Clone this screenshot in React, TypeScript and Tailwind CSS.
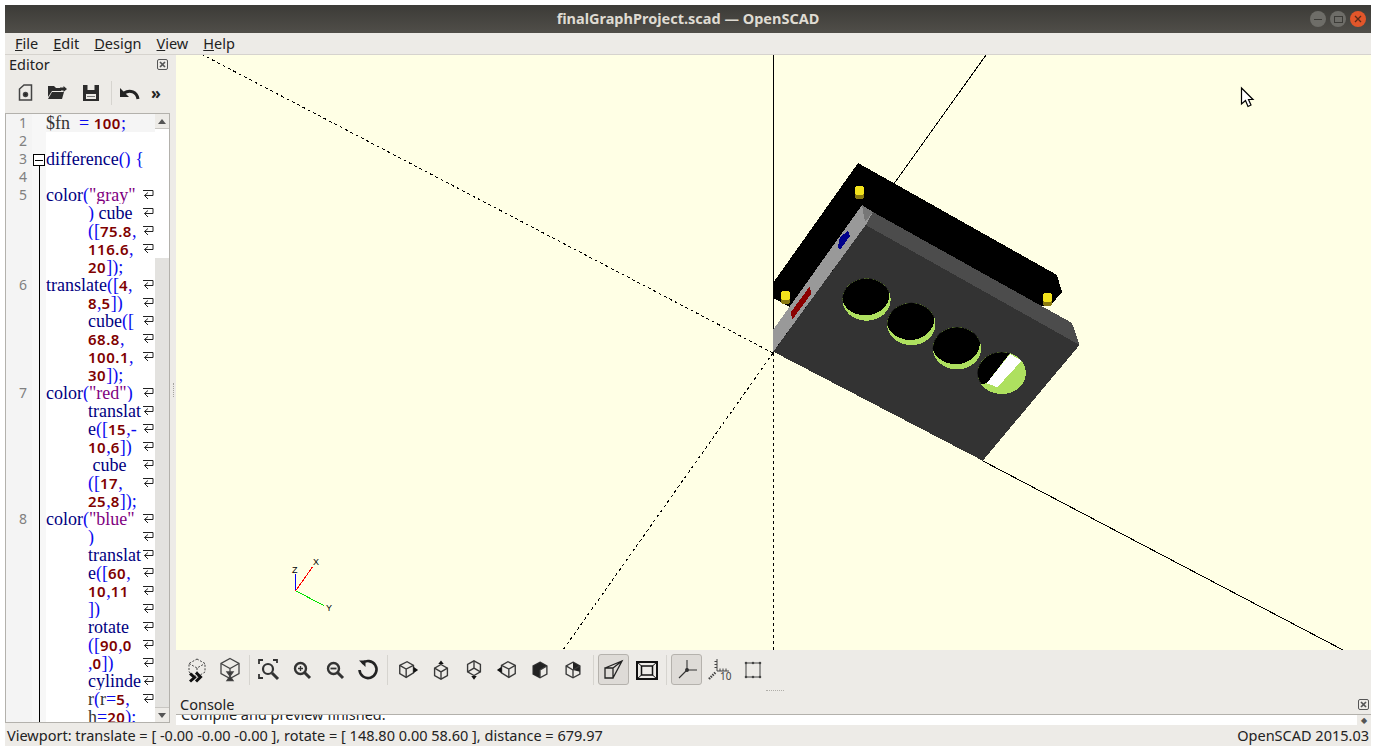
import type { ReactNode } from 'react';

const UI = { fontFamily: '"Noto Sans", sans-serif' };

// token kinds: k keyword, p punctuation, s string, n number, t plain
type Tok = [string, 'k' | 'p' | 's' | 'n' | 't'];
type Row = { no?: number; fold?: boolean; line?: boolean; ind?: boolean; wrap?: boolean; cur?: boolean; toks?: Tok[] };

const rows: Row[] = [
  { no: 1, cur: true, toks: [['$fn', 't'], ['  = ', 'p'], ['100', 'n'], [';', 'p']] },
  { no: 2 },
  { no: 3, fold: true, toks: [['difference', 'k'], ['()', 'p'], [' {', 'p']] },
  { no: 4, line: true },
  { no: 5, line: true, wrap: true, toks: [['color', 'k'], ['(', 'p'], ['"gray"', 's']] },
  { line: true, ind: true, wrap: true, toks: [[')', 'p'], [' cube', 'k']] },
  { line: true, ind: true, wrap: true, toks: [['([', 'p'], ['75.8', 'n'], [',', 'p']] },
  { line: true, ind: true, wrap: true, toks: [['116.6', 'n'], [',', 'p']] },
  { line: true, ind: true, toks: [['20', 'n'], ['])', 'p'], [';', 'p']] },
  { no: 6, line: true, wrap: true, toks: [['translate', 'k'], ['([', 'p'], ['4', 'n'], [',', 'p']] },
  { line: true, ind: true, wrap: true, toks: [['8', 'n'], [',', 'p'], ['5', 'n'], ['])', 'p']] },
  { line: true, ind: true, wrap: true, toks: [['cube', 'k'], ['([', 'p']] },
  { line: true, ind: true, wrap: true, toks: [['68.8', 'n'], [',', 'p']] },
  { line: true, ind: true, wrap: true, toks: [['100.1', 'n'], [',', 'p']] },
  { line: true, ind: true, toks: [['30', 'n'], ['])', 'p'], [';', 'p']] },
  { no: 7, line: true, wrap: true, toks: [['color', 'k'], ['(', 'p'], ['"red"', 's'], [')', 'p']] },
  { line: true, ind: true, wrap: true, toks: [['translat', 'k']] },
  { line: true, ind: true, wrap: true, toks: [['e', 'k'], ['([', 'p'], ['15', 'n'], [',-', 'p']] },
  { line: true, ind: true, wrap: true, toks: [['10', 'n'], [',', 'p'], ['6', 'n'], ['])', 'p']] },
  { line: true, ind: true, wrap: true, toks: [[' cube', 'k']] },
  { line: true, ind: true, wrap: true, toks: [['([', 'p'], ['17', 'n'], [',', 'p']] },
  { line: true, ind: true, toks: [['25', 'n'], [',', 'p'], ['8', 'n'], ['])', 'p'], [';', 'p']] },
  { no: 8, line: true, wrap: true, toks: [['color', 'k'], ['(', 'p'], ['"blue"', 's']] },
  { line: true, ind: true, wrap: true, toks: [[')', 'p']] },
  { line: true, ind: true, wrap: true, toks: [['translat', 'k']] },
  { line: true, ind: true, wrap: true, toks: [['e', 'k'], ['([', 'p'], ['60', 'n'], [',', 'p']] },
  { line: true, ind: true, wrap: true, toks: [['10', 'n'], [',', 'p'], ['11', 'n']] },
  { line: true, ind: true, wrap: true, toks: [['])', 'p']] },
  { line: true, ind: true, wrap: true, toks: [['rotate', 'k']] },
  { line: true, ind: true, wrap: true, toks: [['([', 'p'], ['90', 'n'], [',', 'p'], ['0', 'n']] },
  { line: true, ind: true, wrap: true, toks: [[',', 'p'], ['0', 'n'], ['])', 'p']] },
  { line: true, ind: true, wrap: true, toks: [['cylinde', 'k']] },
  { line: true, ind: true, wrap: true, toks: [['r', 't'], ['(', 'p'], ['r', 't'], ['=', 'p'], ['5', 'n'], [',', 'p']] },
  { line: true, ind: true, toks: [['h', 't'], ['=', 'p'], ['20', 'n'], [')', 'p'], [';', 'p']] },
];

function Token({ tok }: { tok: Tok }) {
  const [text, kind] = tok;
  if (kind === 'n') return <span className="font-['Noto_Sans',sans-serif] text-[15px] font-semibold tracking-[0.5px] text-[#7f0000]">{text}</span>;
  if (kind === 'k') return <span className="text-[#00007f]">{text}</span>;
  if (kind === 's') return <span className="text-[#7f007f]">{text}</span>;
  if (kind === 'p') return <span className="text-[#0a0aee]">{text}</span>;
  return <span className="text-[#333333]">{text}</span>;
}

function WrapMark() {
  return (
    <svg width="11" height="10" viewBox="0 0 11 10" fill="none" stroke="#222" strokeWidth="1">
      <path d="M0 0.5H10V5.5H1.5M5 2.5L1.5 5.5L5 9" />
    </svg>
  );
}

function EditorRow({ row }: { row: Row }) {
  return (
    <div className="flex h-[18px] shrink-0">
      <div className="flex w-[26px] shrink-0 items-center justify-end bg-[#f4f4f4] pb-px pr-[5px] text-[14px] text-[#808080]" style={UI}>
        {row.no}
      </div>
      <div className="relative flex w-[14px] shrink-0 justify-center bg-[#f7f7f7]">
        {row.line && <div className="h-full w-px bg-black" />}
        {row.fold && (
          <>
            <div className="mt-[4px] flex h-[12px] w-[12px] items-center justify-center border border-black bg-white">
              <div className="h-px w-[8px] bg-black" />
            </div>
            <div className="absolute bottom-0 h-[2px] w-px bg-black" />
          </>
        )}
      </div>
      <div className={`flex min-w-0 flex-1 items-center justify-between pr-[1px] ${row.cur ? 'bg-[#f5f5f5]' : 'bg-white'}`}>
        <div className={`-mt-px whitespace-pre font-['Liberation_Serif',serif] text-[18px] leading-[18px] ${row.ind ? 'pl-[42px]' : ''}`}>
          {row.toks?.map((t, i) => <Token key={i} tok={t} />)}
        </div>
        {row.wrap && <WrapMark />}
      </div>
    </div>
  );
}

function CloseBox() {
  return (
    <svg width="11" height="11" viewBox="0 0 11 11" fill="none" stroke="#555">
      <rect x="0.5" y="0.5" width="10" height="10" rx="1.5" />
      <path d="M3 3L8 8M8 3L3 8" strokeWidth="1.7" />
    </svg>
  );
}

function Magnifier({ children }: { children?: ReactNode }) {
  return (
    <svg width="22" height="22" viewBox="0 0 22 22" fill="none" stroke="#333" strokeWidth="2.4">
      <circle cx="9.5" cy="9.5" r="5.5" />
      <path d="M13.5 13.5L19 19" strokeWidth="3" />
      {children}
    </svg>
  );
}

function CubeIcon({ outline, inner, fill, marker }: { outline: string; inner: string; fill?: string; marker?: string }) {
  return (
    <svg width="22" height="22" viewBox="0 0 24 24" fill="none" stroke="#3a3a3a" strokeWidth="1.5">
      <path d={outline} />
      {fill && <path d={fill} fill="#222" stroke="none" />}
      <path d={inner} />
      {marker && <path d={marker} fill="#111" stroke="none" />}
    </svg>
  );
}

const toolbar: ReactNode[] = [
  <svg width="26" height="26" viewBox="0 0 26 26" fill="none" stroke="#444">
    <path d="M13 2L21 6.5V15L13 20L5 15V6.5Z" strokeDasharray="2 1.5" />
    <path d="M5 6.5L13 11L21 6.5M13 11V18" strokeDasharray="2 1.5" />
    <path d="M6 16.5L10.5 20.5L6 24.5M12 15.5L16.5 20L12 24.5" stroke="#111" strokeWidth="3" />
  </svg>,
  <svg width="26" height="26" viewBox="0 0 26 26" fill="none" stroke="#444" strokeWidth="1.3">
    <path d="M13 1.5L22 6.5V16.5L13 21.5L4 16.5V6.5Z" />
    <path d="M4 6.5L13 11.5L22 6.5M13 11.5V15" />
    <path d="M10 15H16L13 19L16 23.5H10L13 19Z" fill="#333" />
  </svg>,
  'sep6',
  <svg width="24" height="24" viewBox="0 0 24 24" fill="none" stroke="#333" strokeWidth="2.2">
    <circle cx="11" cy="11" r="5" />
    <path d="M15 15L21 21" strokeWidth="3" />
    <path d="M2 6V2H6M16 2H20V5M2 16V20H6" strokeWidth="1.8" />
  </svg>,
  <Magnifier><path d="M7 9.5H12M9.5 7V12" strokeWidth="1.3" /></Magnifier>,
  <Magnifier><path d="M6.5 9.5H12.5" strokeWidth="1.8" /></Magnifier>,
  <svg width="24" height="24" viewBox="0 0 24 24" fill="none" stroke="#222" strokeWidth="2.6">
    <path d="M6 5.5A8.5 8.5 0 1 1 3.5 12" />
    <path d="M3 2.5H9.5V9Z" fill="#222" stroke="none" />
  </svg>,
  'sep7',
  <CubeIcon outline="M3 7L11 3L18 7V15L10 20L3 16Z" inner="M3 7L10 11L18 7M10 11V20" marker="M18 8.5L23 12L18 15.5Z" />,
  <CubeIcon outline="M12 6L19 10V18L12 22L5 18V10Z" inner="M5 10L12 14L19 10M12 14V22" marker="M9 5.5L12 1.5L15 5.5Z" />,
  <CubeIcon outline="M12 2L19 6V14L12 18L5 14V6Z" inner="M5 14L12 10L19 14M12 10V2" marker="M9 18.5L12 22.5L15 18.5Z" />,
  <CubeIcon outline="M21 7L13 3L6 7V15L14 20L21 16Z" inner="M21 7L14 11L6 7M14 11V20" marker="M6 8.5L1 12L6 15.5Z" />,
  <CubeIcon
    outline="M12 3.5L19.5 7.5V16.5L12 20.5L4.5 16.5V7.5Z"
    inner="M12 12L19.5 7.5M12 12V20.5"
    fill="M4.5 7.5L12 3.5L19.5 7.5L12 12V20.5L4.5 16.5Z"
  />,
  <CubeIcon
    outline="M12 3.5L19.5 7.5V16.5L12 20.5L4.5 16.5V7.5Z"
    inner="M4.5 7.5L12 12L19.5 7.5M12 12V20.5"
    fill="M12 3.5L19.5 7.5V14L12 12Z"
  />,
  'sep8',
  { active: true, node: (
    <svg width="22" height="22" viewBox="0 0 22 22" fill="none" stroke="#222" strokeWidth="1.3">
      <path d="M2 9H10V19H2ZM2 9L19 2L10 19M10 9L19 2" />
    </svg>
  ) } as unknown as ReactNode,
  <svg width="22" height="22" viewBox="0 0 22 22" fill="none" stroke="#111" strokeWidth="1.5">
    <rect x="1" y="3" width="20" height="17" strokeWidth="2" />
    <rect x="5.5" y="7" width="11" height="9" />
    <path d="M1 3L5.5 7M21 3L16.5 7M1 20L5.5 16M21 20L16.5 16" strokeWidth="1" />
  </svg>,
  'sep7',
  { active: true, node: (
    <svg width="22" height="22" viewBox="0 0 22 22" fill="none" stroke="#333" strokeWidth="1.1">
      <path d="M11 1V11M11 11H21M11 11L3 19" />
      <circle cx="11" cy="11" r="1.4" fill="#333" />
    </svg>
  ) } as unknown as ReactNode,
  <svg width="24" height="24" viewBox="0 0 24 24" fill="none" stroke="#444" strokeWidth="1">
    <path d="M9 1V13H21M6.5 3.5H9M6.5 6.5H9M6.5 9.5H9M12 13V10.5M15 13V10.5M18 13V10.5" />
    <path d="M1 21L8 14" strokeDasharray="1.5 1" strokeWidth="2.4" />
    <text x="12" y="22" fill="#444" stroke="none" fontSize="10" fontFamily="Noto Sans, sans-serif">10</text>
  </svg>,
  <svg width="20" height="20" viewBox="0 0 20 20" fill="none" stroke="#444" strokeWidth="1">
    <rect x="3" y="3" width="14" height="14" />
    <path d="M3 3h.01M17 3h.01M3 17h.01M17 17h.01M10 3h.01M10 17h.01" strokeWidth="2.6" strokeLinecap="round" />
  </svg>,
];

function ViewToolbar() {
  return (
    <div className="flex h-[40px] shrink-0 items-center bg-[#edebe7] pb-[1px] pl-[4px]">
      {toolbar.map((item, i) => {
        if (item === 'sep6' || item === 'sep7' || item === 'sep8') {
          const w = item === 'sep6' ? 'w-[6px]' : item === 'sep7' ? 'w-[7px]' : 'w-[8px]';
          return (
            <div key={i} className={`flex h-[30px] ${w} shrink-0 justify-center`}>
              <div className="h-full w-px bg-[#d6d4cf]" />
            </div>
          );
        }
        const a = item as { active?: boolean; node?: ReactNode };
        return (
          <div key={i} className="flex h-[32px] w-[33px] shrink-0 items-center justify-center">
            {a && a.active ? (
              <div className="flex h-[31px] w-[31px] items-center justify-center rounded-[3px] border border-[#b5b2ad] bg-[#dedbd7]">{a.node}</div>
            ) : (
              item
            )}
          </div>
        );
      })}
    </div>
  );
}

function EditorToolbar() {
  return (
    <div className="flex h-[39px] shrink-0 items-center pb-[2px] pl-[8px] text-[#333]">
      <div className="flex w-[24px] justify-center">
        <svg width="15" height="17" viewBox="0 0 15 17" fill="none" stroke="#444" strokeWidth="1.5">
          <path d="M6 1H13.5V16H1.5V5Z" />
          <circle cx="7.5" cy="10.5" r="2" fill="#222" />
        </svg>
      </div>
      <div className="ml-[8px] flex w-[24px] justify-center">
        <svg width="19" height="13" viewBox="0 0 19 13" fill="#2c2c2c">
          <path d="M0 0H6L8 2H12V3H13V5H4L0 11Z" />
          <path d="M0 13L4 6H16L14 13Z" />
          <path d="M12 1.5H15.5V0L19 3L15.5 6V4.5H12Z" />
        </svg>
      </div>
      <div className="ml-[10px] flex w-[24px] justify-center">
        <svg width="16" height="16" viewBox="0 0 16 16" fill="#2c2c2c">
          <path fillRule="evenodd" d="M0 0H16V16H0ZM4.5 0V5H11.5V0ZM3 9V14H13V9Z" />
          <path d="M4 11H12V12H4Z" fill="#777" />
        </svg>
      </div>
      <div className="ml-[8px] h-[24px] w-px bg-[#d6d4cf]" />
      <div className="ml-[7px] flex w-[22px] justify-center">
        <svg width="20" height="14" viewBox="0 0 20 14" fill="none" stroke="#222" strokeWidth="3">
          <path d="M18 13C17 6 10 3 4 7" />
          <path d="M0 2V11H9Z" fill="#222" stroke="none" />
        </svg>
      </div>
      <div className="ml-[8px] w-[14px] text-center text-[16px] font-bold leading-none text-[#222]" style={UI}>»</div>
    </div>
  );
}

function Hole({ id, cx, cy }: { id: string; cx: number; cy: number }) {
  return (
    <g>
      <clipPath id={id}>
        <ellipse cx={cx} cy={cy} rx="24.2" ry="21.2" />
      </clipPath>
      <ellipse cx={cx} cy={cy} rx="24.2" ry="21.2" fill="#aee05f" />
      <ellipse cx={cx - 1.2} cy={cy - 4.6} rx="24" ry="20.5" fill="#000" clipPath={`url(#${id})`} />
    </g>
  );
}

function Peg({ x, y }: { x: number; y: number }) {
  return (
    <g>
      <rect x={x - 4.5} y={y - 2} width="9" height="9" rx="2.5" fill="#8a7a10" />
      <rect x={x - 4.5} y={y - 6} width="9" height="9" rx="3" fill="#f2e21c" />
    </g>
  );
}

function Scene() {
  return (
    <svg className="block h-full w-full" viewBox="176 55 1195 595" preserveAspectRatio="none" shapeRendering="crispEdges">
      <path d="M773 55V353M773 353L986 55M983 461L1343 650" stroke="#000" fill="none" />
      <path d="M773 353V650M773 353L203 55M773 353L563 650" stroke="#000" fill="none" strokeDasharray="3 3" />

      <path d="M858 163L1057 275L1062 292L1050 306L790 307L773 298V283Z" fill="#000" />
      <path d="M862 205L873 212L865.7 225L773 352V330Z" fill="#999" />
      <path d="M862 205L873 212L865 222Z" fill="#777" />
      <path d="M873 212L1072 323L1079.5 345L865.7 225Z" fill="#4c4c4c" />
      <path d="M865.7 225L1079.5 345L982.7 460.7L773.3 351.7Z" fill="#333" />

      <path d="M791 312L810 286L811 294L792 320Z" fill="#8b0000" />
      <path d="M848 231L850 236L840 250L838 247L840 237Z" fill="#00008b" />

      <Peg x={859.5} y={192} />
      <Peg x={785.7} y={297} />
      <Peg x={1047.5} y={299} />

      <Hole id="h1" cx={866.5} cy={299.5} />
      <Hole id="h2" cx={911.3} cy={324} />
      <Hole id="h3" cx={957} cy={348.3} />
      <g>
        <clipPath id="h4">
          <ellipse cx="1001.7" cy="373" rx="24.2" ry="21" />
        </clipPath>
        <ellipse cx="1001.7" cy="373" rx="24.2" ry="21" fill="#aee05f" />
        <path d="M970 340H1020L986.7 383.3L970 386Z" fill="#000" clipPath="url(#h4)" />
        <path d="M1010 354L1021.7 360.7L997.3 387.3L986.7 383.3Z" fill="#ffffff" clipPath="url(#h4)" />
      </g>

      <path d="M295.7 590.7V574" stroke="#0000ff" />
      <path d="M295.7 590.7L312.7 566.7" stroke="#ff0000" />
      <path d="M295.7 590.7L324 605.7" stroke="#00e000" />
      <g fontFamily="Liberation Sans, sans-serif" fontSize="9" fill="#000">
        <text x="292" y="573">Z</text>
        <text x="313" y="565">X</text>
        <text x="326" y="611">Y</text>
      </g>

      <path d="M1241.5 88V104L1245.5 100.5L1248 106.5L1251 105L1248.5 99.5H1253Z" fill="#fff" stroke="#000" strokeWidth="1.2" shapeRendering="auto" />
    </svg>
  );
}

export default function App() {
  return (
    <div className="min-h-[755px] bg-white pl-[5px] pt-[5px]" style={UI}>
      <div className="flex h-[741px] w-[1366px] flex-col overflow-hidden bg-[#edebe7] text-[14.5px] text-[#222]">
        {/* title bar */}
        <div className="relative flex h-[28px] shrink-0 items-center justify-center bg-gradient-to-b from-[#3c3b37] to-[#504e49]">
          <span className="text-[14.5px] font-bold text-[#dfdbd2]">finalGraphProject.scad — OpenSCAD</span>
          <div className="absolute right-[5px] top-[6px] flex gap-[4px]">
            <div className="flex h-[16px] w-[16px] items-center justify-center rounded-full bg-[#6e6d68]">
              <div className="h-px w-[8px] bg-[#3c3b37]" />
            </div>
            <div className="flex h-[16px] w-[16px] items-center justify-center rounded-full bg-[#6e6d68]">
              <div className="h-[7px] w-[9px] border border-[#3c3b37]" />
            </div>
            <div className="flex h-[16px] w-[16px] items-center justify-center rounded-full bg-[#e2562a]">
              <svg width="8" height="8" viewBox="0 0 8 8" stroke="#5a2a18" strokeWidth="1.3">
                <path d="M1 1L7 7M7 1L1 7" />
              </svg>
            </div>
          </div>
        </div>

        {/* menu */}
        <div className="flex h-[22px] shrink-0 items-center gap-[15px] border-b border-[#d6d3ce] pl-[10px] text-[14.5px]">
          {['File', 'Edit', 'Design', 'View', 'Help'].map((m) => (
            <span key={m}>
              <span className="underline">{m[0]}</span>
              {m.slice(1)}
            </span>
          ))}
        </div>

        {/* body */}
        <div className="flex min-h-0 flex-1">
          <div className="flex w-[166px] shrink-0 flex-col">
            <div className="flex h-[19px] shrink-0 items-center justify-between pl-[4px] pr-[3px]">
              <span>Editor</span>
              <CloseBox />
            </div>
            <EditorToolbar />
            <div className="flex h-[610px] w-[165px] overflow-hidden border border-[#b3b1ac] bg-white">
              <div className="flex min-w-0 flex-1 flex-col overflow-hidden">
                {rows.map((r, i) => <EditorRow key={i} row={r} />)}
              </div>
              <div className="flex w-[14px] shrink-0 flex-col bg-[#e3e2df]">
                <div className="flex h-[15px] items-center justify-center border-b border-[#c8c6c2] bg-[#edebe7]">
                  <div className="h-0 w-0 border-x-[4px] border-b-[5px] border-x-transparent border-b-[#555]" />
                </div>
                <div className="h-[129px] bg-white" />
                <div className="flex-1" />
                <div className="flex h-[15px] items-center justify-center border-t border-[#c8c6c2] bg-[#edebe7]">
                  <div className="h-0 w-0 border-x-[4px] border-t-[5px] border-x-transparent border-t-[#555]" />
                </div>
              </div>
            </div>
          </div>
          <div className="flex w-[5px] shrink-0 items-center justify-center">
            <div className="h-[14px] w-px border-l border-dotted border-[#a5a39e]" />
          </div>

          <div className="flex min-w-0 flex-1 flex-col">
            <div className="h-[595px] shrink-0 bg-[#ffffe5]">
              <Scene />
            </div>
            <ViewToolbar />
            <div className="relative flex h-[24px] shrink-0 items-end justify-between pl-[4px] pr-[2px]">
              <span className="leading-[19px]">Console</span>
              <div className="mb-[4px]"><CloseBox /></div>
              <div className="absolute left-[590px] top-0 w-[18px] border-t border-dotted border-[#b0aea9]" />
            </div>
            <div className="flex h-[11px] shrink-0 overflow-hidden border-t border-[#b3b1ac] bg-white">
              <div className="flex-1 overflow-hidden pl-[5px]">
                <div className="-mt-[10px] leading-[19px]">Compile and preview finished.</div>
              </div>
              <div className="flex w-[14px] items-center justify-center bg-[#edebe7] text-[8px] leading-none text-[#555]">◆</div>
            </div>
          </div>
        </div>

        {/* status bar */}
        <div className="flex h-[21px] shrink-0 items-center justify-between pl-[2px] pr-[2px]">
          <span>Viewport: translate = [ -0.00 -0.00 -0.00 ], rotate = [ 148.80 0.00 58.60 ], distance = 679.97</span>
          <span>OpenSCAD 2015.03</span>
        </div>
      </div>
    </div>
  );
}
